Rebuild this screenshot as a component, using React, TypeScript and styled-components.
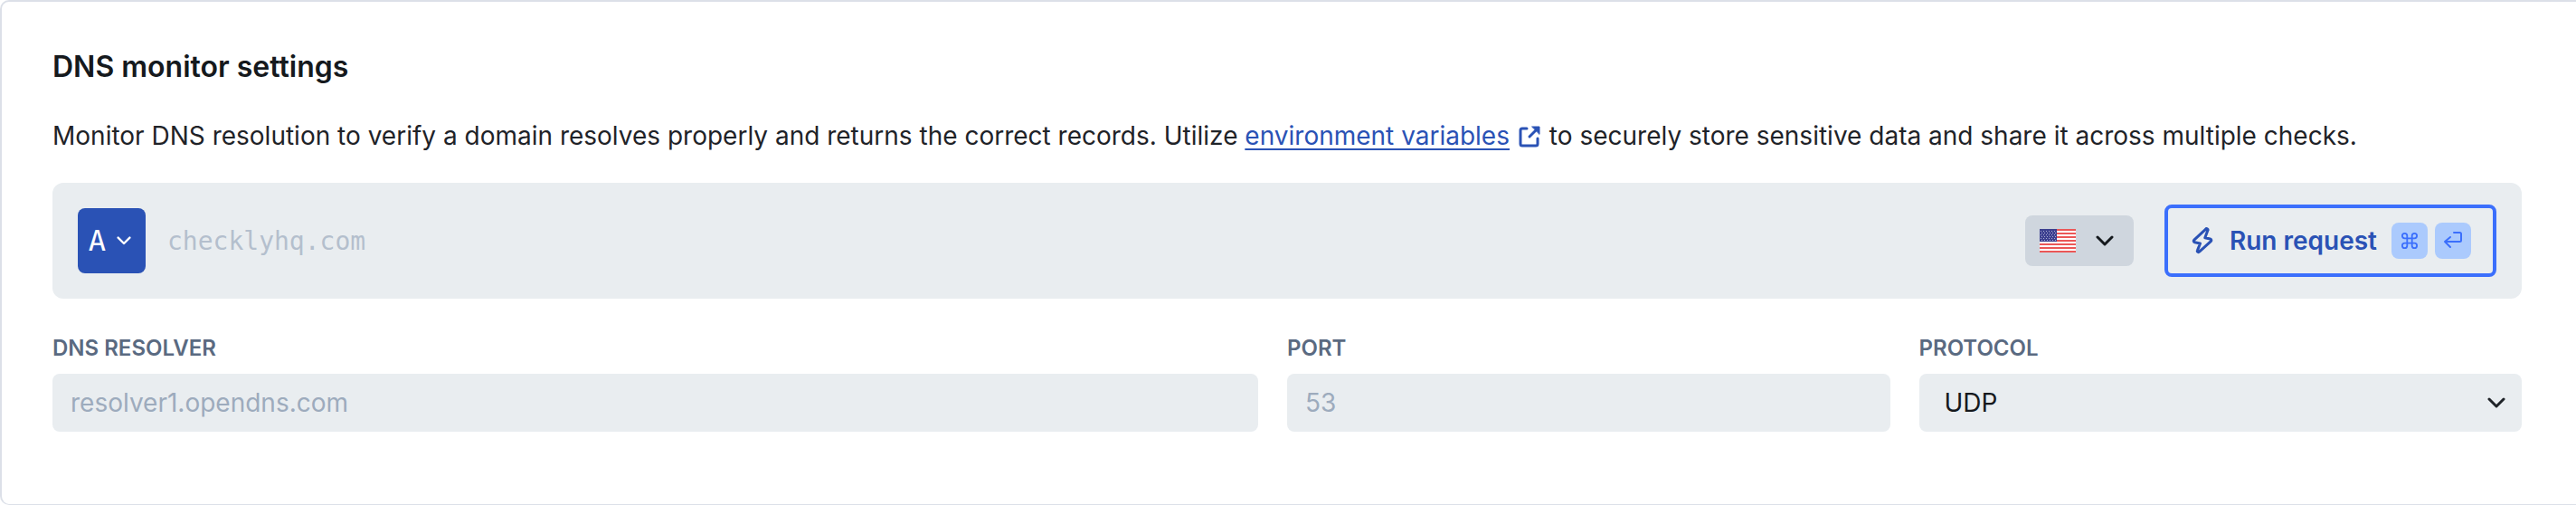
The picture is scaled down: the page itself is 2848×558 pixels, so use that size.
import React from "react";
import styled, { createGlobalStyle } from "styled-components";

const GlobalStyle = createGlobalStyle`
  *, *::before, *::after { box-sizing: border-box; }
  body { margin: 0; background: #fff; font-family: Inter, "Liberation Sans", sans-serif; }
  input, select, button { font: inherit; margin: 0; }
  svg { display: block; flex: none; }
`;

const Panel = styled.section`
  padding: 48px 60px 80px 56px;
  border: 2px solid #dce0e8;
  border-right: 0;
  border-bottom-width: 1px;
  border-radius: 10px 0 0 10px;
  background: #fff;
  color: #1f2328;
  font-size: 28px;
  line-height: 40px;
`;

const Title = styled.h2`
  margin: 0;
  font-size: 32px;
  line-height: 48px;
  font-weight: 600;
  color: #15191d;
`;

const Description = styled.p`
  margin: 32px 0;
`;

const DocsLink = styled.a`
  color: #2a52b5;
  text-decoration: none;
  span {
    text-decoration: underline;
    text-decoration-thickness: 2px;
    text-underline-offset: 4px;
  }
  svg { display: inline-block; vertical-align: -3px; margin: 0 2px 0 10px; }
`;

const RequestBar = styled.div`
  display: flex;
  align-items: center;
  height: 128px;
  padding: 0 28px;
  border-radius: 12px;
  background: #e9edf0;
`;

const RecordButton = styled.button`
  display: flex;
  align-items: center;
  justify-content: center;
  gap: 12px;
  width: 75px;
  height: 72px;
  padding: 0 4px 0 0;
  border: 0;
  border-radius: 8px;
  background: #2a52b5;
  color: #fff;
  font-family: "DejaVu Sans Mono", monospace;
  font-size: 32px;
`;

const DomainInput = styled.input`
  flex: 1;
  min-width: 0;
  height: 72px;
  padding: 0 24px;
  border: 0;
  background: transparent;
  color: #15191d;
  font-family: "DejaVu Sans Mono", monospace;
  &::placeholder { color: #b4bfcd; opacity: 1; }
`;

const RegionButton = styled.button`
  display: flex;
  align-items: center;
  justify-content: space-between;
  width: 120px;
  height: 56px;
  margin-right: 34px;
  padding: 0 22px 0 16px;
  border: 0;
  border-radius: 8px;
  background: #cfd6de;
  color: #15191d;
`;

const RunButton = styled.button`
  display: flex;
  align-items: center;
  height: 80px;
  padding: 0 24px 0 26px;
  border: 4px solid #3b6ffc;
  border-radius: 8px;
  background: transparent;
  color: #2a52b5;
  font-weight: 600;
  white-space: nowrap;
`;

const RunText = styled.span`
  margin: 0 16px 0 18px;
`;

const Keys = styled.span`
  display: flex;
  gap: 8px;
`;

const Key = styled.kbd`
  display: flex;
  align-items: center;
  justify-content: center;
  width: 40px;
  height: 40px;
  border-radius: 8px;
  background: #abcafd;
  color: #3b6ffc;
`;

const Fields = styled.div`
  display: grid;
  grid-template-columns: 2fr 1fr 1fr;
  gap: 32px;
  margin-top: 39px;
`;

const Field = styled.div`
  display: flex;
  flex-direction: column;
  gap: 12px;
  min-width: 0;
`;

const Label = styled.label`
  color: #5a6a81;
  font-size: 24px;
  line-height: 32px;
  font-weight: 600;
`;

const TextInput = styled.input`
  width: 100%;
  height: 64px;
  padding: 0 20px;
  border: 0;
  border-radius: 8px;
  background: #e9edf0;
  color: #15191d;
  &::placeholder { color: #9dabbd; opacity: 1; }
`;

const SelectBox = styled.div`
  display: grid;
  align-items: center;
  & > * { grid-area: 1 / 1; }
  svg { justify-self: end; margin-right: 18px; pointer-events: none; }
`;

const Select = styled.select`
  appearance: none;
  width: 100%;
  height: 64px;
  padding: 0 28px;
  border: 0;
  border-radius: 8px;
  background: #e9edf0;
  color: #15191d;
`;

const Chevron = ({ width }: { width: number }) => (
  <svg width={width} height={width * 0.6} viewBox="0 0 20 12" fill="none" stroke="currentColor" strokeWidth="3" strokeLinecap="round" strokeLinejoin="round" aria-hidden="true">
    <path d="M2 2l8 8 8-8" />
  </svg>
);

const ExternalIcon = () => (
  <svg width="24" height="24" viewBox="0 0 24 24" fill="none" stroke="currentColor" strokeWidth="3" strokeLinecap="round" strokeLinejoin="round" aria-hidden="true">
    <path d="M9 3H4a2 2 0 0 0-2 2v15a2 2 0 0 0 2 2h15a2 2 0 0 0 2-2v-6M12 12l8-8" />
    <path d="M15 1h8v8z" fill="currentColor" strokeWidth="1" />
  </svg>
);

const Flag = () => (
  <svg width="40" height="26" viewBox="0 0 40 26" role="img" aria-label="United States">
    <path fill="#fff" d="M0 0h40v26H0z" />
    <path stroke="#eb5757" strokeWidth="2" d="M0 1h40M0 5h40M0 9h40M0 13h40M0 17h40M0 21h40M0 25h40" />
    <path fill="#3c408f" d="M0 0h19v14H0z" />
    <path stroke="#a9abd2" strokeWidth="1" strokeDasharray="1 2" d="M1 2.500h17M2 4.500h16M1 6.500h17M2 8.500h16M1 10.500h17M2 12.500h16" />
  </svg>
);

const BoltIcon = () => (
  <svg width="24" height="30" viewBox="0 0 24 30" fill="none" stroke="currentColor" strokeWidth="3" strokeLinejoin="round" aria-hidden="true">
    <path d="M15.500 2.300L2.800 14.200a1.500 1.500 0 0 0 .7 2.600L9.500 18l-3 7.600a1.300 1.300 0 0 0 2.100 1.500L21.300 15.600a1.500 1.500 0 0 0-.7-2.600L14.800 11.800l2.900-7.900a1.300 1.300 0 0 0-2.200-1.600z" />
  </svg>
);

const CommandIcon = () => (
  <svg width="18" height="18" viewBox="0 0 20 20" fill="none" stroke="currentColor" strokeWidth="2" aria-hidden="true">
    <path d="M7 7V4a3 3 0 1 0-3 3h12a3 3 0 1 0-3-3v12a3 3 0 1 0 3-3H4a3 3 0 1 0 3 3V7" />
  </svg>
);

const ReturnIcon = () => (
  <svg width="22" height="20" viewBox="0 1 22 20" fill="none" stroke="currentColor" strokeWidth="2" strokeLinecap="round" strokeLinejoin="round" aria-hidden="true">
    <path d="M12 2h6.500a1.500 1.500 0 0 1 1.500 1.500v7a1.500 1.500 0 0 1-1.500 1.500H2M8 7l-6 5 6 6" />
  </svg>
);

export default function App() {
  return (
    <>
      <GlobalStyle />
      <Panel>
        <Title>DNS monitor settings</Title>
        <Description>
          Monitor DNS resolution to verify a domain resolves properly and returns the correct records. Utilize{" "}
          <DocsLink href="#environment-variables">
            <span>environment variables</span>
            <ExternalIcon />
          </DocsLink>{" "}
          to securely store sensitive data and share it across multiple checks.
        </Description>
        <RequestBar>
          <RecordButton type="button" aria-label="Record type A">
            A
            <Chevron width={16} />
          </RecordButton>
          <DomainInput aria-label="Domain" placeholder="checklyhq.com" />
          <RegionButton type="button" aria-label="Region">
            <Flag />
            <Chevron width={20} />
          </RegionButton>
          <RunButton type="button">
            <BoltIcon />
            <RunText>Run request</RunText>
            <Keys>
              <Key><CommandIcon /></Key>
              <Key><ReturnIcon /></Key>
            </Keys>
          </RunButton>
        </RequestBar>
        <Fields>
          <Field>
            <Label htmlFor="resolver">DNS RESOLVER</Label>
            <TextInput id="resolver" placeholder="resolver1.opendns.com" />
          </Field>
          <Field>
            <Label htmlFor="port">PORT</Label>
            <TextInput id="port" inputMode="numeric" placeholder="53" />
          </Field>
          <Field>
            <Label htmlFor="protocol">PROTOCOL</Label>
            <SelectBox>
              <Select id="protocol" defaultValue="UDP">
                <option>UDP</option>
                <option>TCP</option>
              </Select>
              <Chevron width={20} />
            </SelectBox>
          </Field>
        </Fields>
      </Panel>
    </>
  );
}
